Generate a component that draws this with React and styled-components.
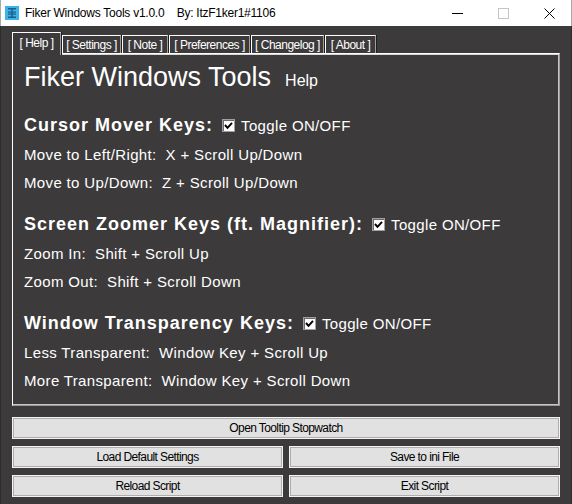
import React from 'react';
import styled, { createGlobalStyle } from 'styled-components';

const GlobalStyle = createGlobalStyle`
  html, body {
    margin: 0;
    padding: 0;
    background: #3c3a3b;
  }
  body {
    width: 572px;
    height: 504px;
    overflow: hidden;
  }
`;

const Window = styled.div`
  width: 572px;
  height: 504px;
  display: flex;
  flex-direction: column;
  background: #3c3a3b;
  font-family: "Liberation Sans", Arial, sans-serif;
`;

const TitleBar = styled.div`
  height: 26px;
  flex: none;
  display: flex;
  align-items: center;
  background: #fff;
  box-shadow: inset 1px 0 0 #aaa, inset -1px 0 0 #aaa;
`;

const AppIcon = styled.svg`
  width: 14px;
  height: 14px;
  margin-left: 5px;
  flex: none;
`;

const TitleText = styled.span`
  margin-left: 6px;
  font-size: 12px;
  letter-spacing: -0.25px;
  color: #000;
  white-space: pre;
`;

const Controls = styled.div`
  margin-left: auto;
  display: flex;
  height: 100%;
`;

const ControlButton = styled.div`
  width: 46px;
  height: 100%;
  display: flex;
  align-items: center;
  justify-content: center;
`;

const Body = styled.div`
  flex: 1;
  display: flex;
  flex-direction: column;
  padding: 6px 11px 0 11px;
  border-left: 1px solid #2d2d2d;
  border-right: 1px solid #2d2d2d;
`;

const TabRow = styled.div`
  height: 21px;
  display: flex;
  align-items: flex-end;
  gap: 1px;
`;

const Tab = styled.div`
  position: relative;
  z-index: ${p => (p.active ? 1 : 0)};
  box-sizing: border-box;
  width: ${p => p.w}px;
  height: ${p => (p.active ? 23 : 18)}px;
  margin-bottom: ${p => (p.active ? -2 : 0)}px;
  display: flex;
  align-items: center;
  justify-content: center;
  padding-bottom: ${p => (p.active ? 3 : 0)}px;
  background: #3c3a3b;
  border-top: 1px solid #fff;
  border-left: 1px solid #fff;
  border-right: 1px solid #a0a0a0;
  box-shadow: 1px 0 0 #1f1f1f;
  color: #fff;
  font-size: 12px;
  letter-spacing: -0.5px;
  white-space: pre;
`;

const Panel = styled.div`
  box-sizing: border-box;
  height: 353px;
  flex: none;
  display: flex;
  flex-direction: column;
  padding: 6px 0 0 11px;
  border-top: 1px solid #fff;
  border-left: 1px solid #fff;
  border-right: 1px solid #999;
  border-bottom: 1px solid #999;
  box-shadow: inset 0 1px 0 #d8d8d8, inset -1px -1px 0 #c6c6c6;
  color: #fff;
`;

const TitleRow = styled.div`
  display: flex;
  align-items: baseline;
  height: 34px;
  margin-bottom: 4px;
`;

const BigTitle = styled.span`
  font-size: 27px;
  line-height: 34px;
`;

const SubTitle = styled.span`
  font-size: 16px;
  margin-left: 14px;
`;

const Section = styled.section`
  margin-top: 11px;
`;

const SectionHeader = styled.div`
  display: flex;
  align-items: center;
  height: 32px;
`;

const HeaderText = styled.span`
  font-size: 18px;
  font-weight: bold;
  letter-spacing: 1px;
`;

const CheckBox = styled.span`
  box-sizing: border-box;
  width: 13px;
  height: 13px;
  margin-left: 9px;
  display: inline-flex;
  align-items: center;
  justify-content: center;
  background: #fff;
  border: 1px solid #a0a0a0;
  box-shadow: inset 1px 1px 0 #6a6a6a;
`;

const ToggleText = styled.span`
  margin-left: 6px;
  font-size: 15px;
  letter-spacing: 0.35px;
`;

const Line = styled.div`
  font-size: 15px;
  letter-spacing: 0.35px;
  line-height: 28px;
  white-space: pre;
`;

const ButtonGrid = styled.div`
  margin-top: 11px;
  display: grid;
  grid-template-columns: 1fr 1fr;
  column-gap: 6px;
  row-gap: 7px;
`;

const Button = styled.div`
  grid-column: ${p => (p.wide ? '1 / span 2' : 'auto')};
  box-sizing: border-box;
  height: 22px;
  display: flex;
  align-items: center;
  justify-content: center;
  background: #e1e1e1;
  border: 1px solid #f4f4f4;
  box-shadow: inset 0 0 0 1px #adadad;
  color: #000;
  font-size: 12px;
  letter-spacing: -0.6px;
  white-space: pre;
`;

const tabs = [
  { label: '[ Help ]', w: 49, active: true },
  { label: '[ Settings ]', w: 59 },
  { label: '[ Note ]', w: 46 },
  { label: '[ Preferences ]', w: 81 },
  { label: '[ Changelog ]', w: 73 },
  { label: '[ About ]', w: 51 },
];

const sections = [
  {
    title: 'Cursor Mover Keys:',
    lines: ['Move to Left/Right:  X + Scroll Up/Down', 'Move to Up/Down:  Z + Scroll Up/Down'],
  },
  {
    title: 'Screen Zoomer Keys (ft. Magnifier):',
    lines: ['Zoom In:  Shift + Scroll Up', 'Zoom Out:  Shift + Scroll Down'],
  },
  {
    title: 'Window Transparency Keys:',
    lines: ['Less Transparent:  Window Key + Scroll Up', 'More Transparent:  Window Key + Scroll Down'],
  },
];

function Check() {
  return (
    <svg width="9" height="9" viewBox="0 0 9 9">
      <polyline points="1,4 3.5,6.8 8,1.8" fill="none" stroke="#000" strokeWidth="2" />
    </svg>
  );
}

export default function App() {
  return (
    <Window>
      <GlobalStyle />
      <TitleBar>
        <AppIcon viewBox="0 0 14 14">
          <rect x="0" y="0" width="14" height="14" fill="#3cb4e8" />
          <rect x="3" y="2" width="8" height="1.5" fill="#1b5e8c" />
          <rect x="3" y="5.5" width="8" height="1.2" fill="#1b5e8c" />
          <rect x="3" y="7.5" width="8" height="1.2" fill="#1b5e8c" />
          <rect x="3" y="10.5" width="8" height="1.5" fill="#1b5e8c" />
          <rect x="6.3" y="2" width="1.4" height="10" fill="#1b5e8c" />
        </AppIcon>
        <TitleText>{'Fiker Windows Tools v1.0.0    By: ItzF1ker1#1106'}</TitleText>
        <Controls>
          <ControlButton>
            <svg width="11" height="11" viewBox="0 0 11 11">
              <line x1="0" y1="5.5" x2="11" y2="5.5" stroke="#000" strokeWidth="1" />
            </svg>
          </ControlButton>
          <ControlButton>
            <svg width="11" height="11" viewBox="0 0 11 11">
              <rect x="0.5" y="0.5" width="10" height="10" fill="none" stroke="#c4c4c4" strokeWidth="1" />
            </svg>
          </ControlButton>
          <ControlButton>
            <svg width="11" height="11" viewBox="0 0 11 11">
              <path d="M0.5 0.5 L10.5 10.5 M10.5 0.5 L0.5 10.5" stroke="#000" strokeWidth="1" />
            </svg>
          </ControlButton>
        </Controls>
      </TitleBar>
      <Body>
        <TabRow>
          {tabs.map(t => (
            <Tab key={t.label} w={t.w} active={t.active}>{t.label}</Tab>
          ))}
        </TabRow>
        <Panel>
          <TitleRow>
            <BigTitle>Fiker Windows Tools</BigTitle>
            <SubTitle>Help</SubTitle>
          </TitleRow>
          {sections.map(s => (
            <Section key={s.title}>
              <SectionHeader>
                <HeaderText>{s.title}</HeaderText>
                <CheckBox><Check /></CheckBox>
                <ToggleText>Toggle ON/OFF</ToggleText>
              </SectionHeader>
              {s.lines.map(l => (
                <Line key={l}>{l}</Line>
              ))}
            </Section>
          ))}
        </Panel>
        <ButtonGrid>
          <Button wide>Open Tooltip Stopwatch</Button>
          <Button>Load Default Settings</Button>
          <Button>Save to ini File</Button>
          <Button>Reload Script</Button>
          <Button>Exit Script</Button>
        </ButtonGrid>
      </Body>
    </Window>
  );
}
